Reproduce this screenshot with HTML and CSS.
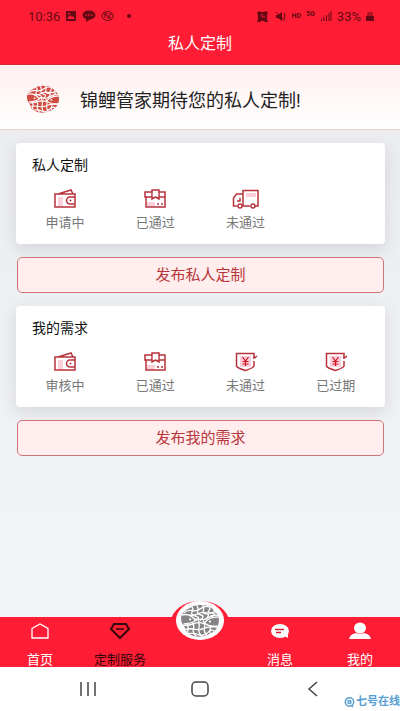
FILE: index.html
```html
<!DOCTYPE html>
<html lang="zh-CN">
<head>
    <meta charset="UTF-8">
    <meta name="viewport" content="width=device-width, initial-scale=1.0">
    <title>私人定制</title>
    <link rel="stylesheet" href="styles.css">
</head>
<body>
    <!-- Shared icons -->
    <svg class="sprite" aria-hidden="true">
        <defs>
            <clipPath id="fish-outline">
                <path d="M8 4Q13 0 20 1Q28 1 31 7Q36 10 35 17Q34 24 27 27Q20 31 12 29Q5 27 4 21Q0 17 1 11Q3 6 8 4Z"/>
            </clipPath>
            <symbol id="fish" viewBox="0 0 36 30">
                <g clip-path="url(#fish-outline)">
                    <path d="M0 0h36v30H0z" fill="currentColor"/>
                    <!-- scales -->
                    <g fill="none" stroke="#fff" stroke-width="1.2">
                        <path d="M3 8Q7 5 11 6T19 4T27 3M8 10Q12 11 16 9T24 8T31 7M13 14Q16 13 19 14T26 12T36 11"/>
                        <path d="M0 19Q7 20 12 18T22 18M4 23Q10 22 14 23T22 22T35 21M7 27Q13 26 17 28T25 26T31 25"/>
                        <path d="M9 1Q13 4 11 7T14 11T14 15M14 0Q17 3 16 6T19 10T18 15M20 0Q22 3 21 6T24 9T23 14M26 1Q28 4 26 6T29 8T28 12"/>
                        <path d="M6 18Q8 21 7 24T10 30M11 17Q13 20 12 23T15 30M16 13Q18 18 17 22T20 30M21 15Q23 19 22 22T25 30M27 20Q28 22 27 24T29 29"/>
                        <path d="M1 10Q9 8 14 15Q10 18 3 18M36 12Q27 11 22 17Q26 21 34 20"/>
                    </g>
                    <circle cx="9" cy="14" r="1" fill="#fff"/>
                    <circle cx="27" cy="16" r="1" fill="#fff"/>
                </g>
            </symbol>
            <symbol id="wallet" viewBox="0 0 24 20">
                <path d="M5 8h5v9H5z" fill="#fbd0da"/>
                <path d="M2 5h20v13H2zM5 5l13-4 2 4M22 8h-5a3.5 3.5 0 0 0 0 7h5" fill="none" stroke="#b8323c" stroke-width="1.5"/>
                <circle cx="17.5" cy="11.5" r="1" fill="#b8323c"/>
            </symbol>
            <symbol id="box" viewBox="0 0 24 20">
                <path d="M4 13h8v4H4z" fill="#fbd0da"/>
                <path d="M3 8v10h19V8M2 3h20v5H2zM9 1h7v9l-3.5-2L9 10z" fill="none" stroke="#b8323c" stroke-width="1.5"/>
                <path d="M9.8 2h5.4v6.5L12.5 7 9.800 8.500z" fill="#fff"/>
                <path d="M14 15h2M18 15h2" stroke="#b8323c" stroke-width="1.5"/>
            </symbol>
            <symbol id="truck" viewBox="0 0 28 20">
                <path d="M14 4h10v4H14z" fill="#fbd0da"/>
                <path d="M5 17H1.500V9l3-4H11M11 17V1.500h15V17h-3M10 17h8M8 9v3H5" fill="none" stroke="#b8323c" stroke-width="1.5"/>
                <circle cx="8" cy="17" r="2" fill="#fff" stroke="#b8323c" stroke-width="1.5"/>
                <circle cx="21" cy="17" r="2" fill="#fff" stroke="#b8323c" stroke-width="1.5"/>
            </symbol>
            <symbol id="shield" viewBox="0 0 24 20">
                <path d="M6 4h11v11H6z" fill="#fbd0da"/>
                <path d="M20 6V1.5H2.500V14Q3 16 11.500 18.500Q19 16 20 14V9M19 6h1.500L23 4" fill="none" stroke="#b8323c" stroke-width="1.5"/>
                <path d="M8.500 5l3 4 3-4M8.500 9.500h6M8.500 12h6M11.500 9v5" fill="none" stroke="#d3131f" stroke-width="1.2"/>
            </symbol>
        </defs>
    </svg>

    <header class="header">
        <div class="status">
            <div class="status-group">
                <span>10:36</span>
                <svg width="12" height="12" viewBox="0 0 12 12"><path d="M1 1h10v10H1z" fill="#650914"/><path d="M2 9l3-4 2 2 1-1 2 3z" fill="#ff1d35"/><path d="M3 3h2v1H3z" fill="#ff1d35"/></svg>
                <svg width="14" height="12" viewBox="0 0 14 12"><ellipse cx="7" cy="5" rx="6.5" ry="4.5" fill="#650914"/><path d="M4 8v4l5-3z" fill="#650914"/><path d="M3 5h2M6 5h2M9 5h2" stroke="#ff1d35"/></svg>
                <svg width="13" height="12" viewBox="0 0 13 12"><g fill="none" stroke="#650914"><ellipse cx="6.5" cy="6" rx="5.5" ry="4.5"/><path d="M2 3l9 6M4 8V4l3-1M7 9l2-5h2"/></g></svg>
                <span class="dot"></span>
            </div>
            <div class="status-group">
                <svg width="11" height="11" viewBox="0 0 11 11"><path d="M0 2l2-2 2 1h3l2-1 2 2-1 2v4l1 3H8L7 10H4l-1 1H0l1-3V4z" fill="#650914"/><path d="M5 3v3h3" fill="none" stroke="#ff1d35"/></svg>
                <svg class="mute" width="12" height="11" viewBox="0 0 12 11"><path d="M1 4h2l4-3v9L3 7H1z" fill="#650914"/><path d="M1 1l9 9M9 2l1 2-1 2 1 2" fill="none" stroke="#650914"/></svg>
                <span class="tiny">HD</span>
                <span class="tiny net">5G</span>
                <svg width="12" height="10" viewBox="0 0 12 10"><path d="M1.500 8v2M4 6v4M6.500 4v6M9 2v8M11 0v10" stroke="#650914"/></svg>
                <span>33%</span>
                <svg width="8" height="11" viewBox="0 0 8 11"><path d="M2 1h4v1h1v3H1V2h1z" fill="#b51223"/><path d="M0 5h8v5H0z" fill="#650914"/></svg>
            </div>
        </div>
        <h1 class="title">私人定制</h1>
    </header>

    <main class="main">
        <section class="banner">
            <svg class="banner-logo" aria-hidden="true"><use href="#fish"/></svg>
            <p>锦鲤管家期待您的私人定制!</p>
        </section>

        <div class="content">
            <section class="card">
                <h2>私人定制</h2>
                <div class="items">
                    <a href="#"><svg><use href="#wallet"/></svg>申请中</a>
                    <a href="#"><svg><use href="#box"/></svg>已通过</a>
                    <a href="#"><svg class="wide"><use href="#truck"/></svg>未通过</a>
                </div>
            </section>
            <button class="publish" type="button">发布私人定制</button>

            <section class="card">
                <h2>我的需求</h2>
                <div class="items">
                    <a href="#"><svg><use href="#wallet"/></svg>审核中</a>
                    <a href="#"><svg><use href="#box"/></svg>已通过</a>
                    <a href="#"><svg><use href="#shield"/></svg>未通过</a>
                    <a href="#"><svg><use href="#shield"/></svg>已过期</a>
                </div>
            </section>
            <button class="publish" type="button">发布我的需求</button>
        </div>
    </main>

    <!-- Bottom tabs -->
    <nav class="tabs">
        <a href="#">
            <svg width="20" height="18" viewBox="0 0 20 18"><path d="M2 6.500L10 2l8 4.500V16H2z" fill="none" stroke="#fff" stroke-width="1.3"/></svg>
            首页
        </a>
        <a href="#" class="active">
            <svg width="22" height="18" viewBox="0 0 22 18"><path d="M5 2h12l3 5-9 9-9-9z" fill="none" stroke="#38070c" stroke-width="2"/><path d="M7 7h8" stroke="#38070c" stroke-width="1.5"/></svg>
            定制服务
        </a>
        <a href="#" class="center" aria-label="锦鲤管家">
            <span class="ring"><span class="center-logo"><svg><use href="#fish"/></svg></span></span>
        </a>
        <a href="#">
            <svg width="20" height="18" viewBox="0 0 20 18"><ellipse cx="10" cy="9" rx="9" ry="7" fill="#fff"/><path d="M13 13l5-1v4z" fill="#fff"/><path d="M5 7.500h9M6 10.500h5" stroke="#d51d30" stroke-width="1.5"/></svg>
            消息
        </a>
        <a href="#">
            <svg width="22" height="18" viewBox="0 0 22 18"><ellipse cx="11" cy="6" rx="6" ry="5.5" fill="#fff"/><path d="M0 17Q1 12 7 11Q11 13 15 11Q21 12 22 17z" fill="#fff"/></svg>
            我的
        </a>
    </nav>

    <!-- System navigation -->
    <div class="system">
        <button type="button" aria-label="最近"><svg width="18" height="16" viewBox="0 0 18 16"><path d="M2 1v14M9 1v14M16 1v14" stroke="#444" stroke-width="1.5"/></svg></button>
        <button type="button" aria-label="主页"><svg width="18" height="16" viewBox="0 0 18 16"><rect x="1" y="1" width="16" height="14" rx="4" fill="none" stroke="#444" stroke-width="1.5"/></svg></button>
        <button type="button" aria-label="返回"><svg width="18" height="16" viewBox="0 0 18 16"><path d="M14 1L6 8l8 7" fill="none" stroke="#444" stroke-width="1.5"/></svg></button>
        <div class="mark">
            <svg width="11" height="11" viewBox="0 0 11 11"><g fill="none" stroke="#5a9fd2" stroke-width="1.5"><circle cx="5.5" cy="5" r="4.2"/><circle cx="5.5" cy="5" r="1.5"/><path d="M7 8l2 2"/></g></svg>
            <span>七号在线</span>
        </div>
    </div>
</body>
</html>
```
FILE: styles.css
```css
* {
    box-sizing: border-box;
}
body {
    margin: 0;
    min-height: 100vh;
    display: flex;
    flex-direction: column;
    font-family: Roboto, "Noto Sans CJK SC", sans-serif;
    background: #f3f4f7;
    color: #222;
}
h1, h2, p {
    margin: 0;
    font-weight: normal;
}
a {
    color: inherit;
    text-decoration: none;
}
button {
    font-family: inherit;
    padding: 0;
    cursor: pointer;
}
svg {
    display: block;
}
.sprite {
    position: absolute;
    width: 0;
    height: 0;
}

/* Header */
.header {
    height: 65px;
    background: #ff1d35;
    border-bottom: 1px solid #d92a3c;
}
.status {
    height: 32px;
    padding: 0 26px 0 28px;
    display: flex;
    justify-content: space-between;
    align-items: center;
    font-size: 13px;
    color: #650914;
}
.status-group {
    display: flex;
    align-items: center;
    gap: 5px;
}
.dot {
    width: 4px;
    height: 4px;
    margin-left: 8px;
    border-radius: 50%;
    background: #650914;
}
.tiny {
    font-size: 7px;
    font-weight: bold;
}
.mute {
    margin-left: 2px;
}
.net {
    padding-bottom: 4px;
}
.title {
    font-size: 16px;
    line-height: 24px;
    text-align: center;
    color: #fff;
}

/* Page content */
.main {
    flex: 1;
    background: linear-gradient(#ebecf0, #f3f4f7);
}
.banner {
    height: 65px;
    display: flex;
    align-items: center;
    gap: 20px;
    padding: 4px 26px 0;
    font-size: 18px;
    background: linear-gradient(#fff0ef, #fff);
    border-bottom: 1px solid #edd0d0;
}
.banner-logo {
    width: 34px;
    height: 28px;
    color: #cf4a40;
}
.content {
    display: flex;
    flex-direction: column;
    gap: 13px;
    padding: 13px 15px 20px 16px;
}
.card {
    height: 101px;
    padding: 12px 4px 0;
    border-radius: 4px;
    background: #fff;
    box-shadow: 0 5px 16px rgba(60, 65, 80, 0.15);
}
.card h2 {
    padding-left: 12px;
    font-size: 14px;
    line-height: 20px;
    color: #111;
}
.items {
    display: grid;
    grid-template-columns: repeat(4, 1fr);
    margin-top: 14px;
}
.items a {
    display: flex;
    flex-direction: column;
    align-items: center;
    gap: 5px;
    font-size: 13px;
    line-height: 18px;
    color: #777;
}
.items svg {
    width: 24px;
    height: 20px;
}
.items .wide {
    width: 28px;
}
.publish {
    height: 36px;
    margin: 0 1px;
    padding-bottom: 4px;
    border: 1px solid #cf7478;
    border-radius: 5px;
    font-size: 15px;
    color: #b8353a;
    background: #ffeeed;
}

/* Bottom tabs */
.tabs {
    height: 50px;
    display: grid;
    grid-template-columns: repeat(5, 1fr);
    background: #ff1d35;
    font-size: 13px;
    line-height: 14px;
    color: #fff;
}
.tabs a {
    display: flex;
    flex-direction: column;
    justify-content: space-between;
    align-items: center;
    padding-top: 5px;
    white-space: nowrap;
}
.tabs .active {
    color: #38070c;
}
.tabs .center {
    position: relative;
}
.ring {
    position: absolute;
    top: -16px;
    display: flex;
    justify-content: center;
    width: 58px;
    height: 42px;
    border-radius: 50%;
    background: #ff1d35;
}
.center-logo {
    display: flex;
    justify-content: center;
    align-items: center;
    width: 48px;
    height: 39px;
    border-radius: 50%;
    background: #fff;
}
.center-logo svg {
    width: 40px;
    height: 33px;
    color: #858585;
}

/* System navigation */
.system {
    position: relative;
    height: 44px;
    display: flex;
    justify-content: center;
    gap: 94px;
    background: #fff;
}
.system button {
    border: none;
    background: none;
}
.mark {
    position: absolute;
    right: 0;
    bottom: 2px;
    display: flex;
    align-items: center;
    gap: 1px;
    font-size: 11px;
    line-height: 14px;
    font-weight: bold;
    color: #5a9fd2;
}
```
